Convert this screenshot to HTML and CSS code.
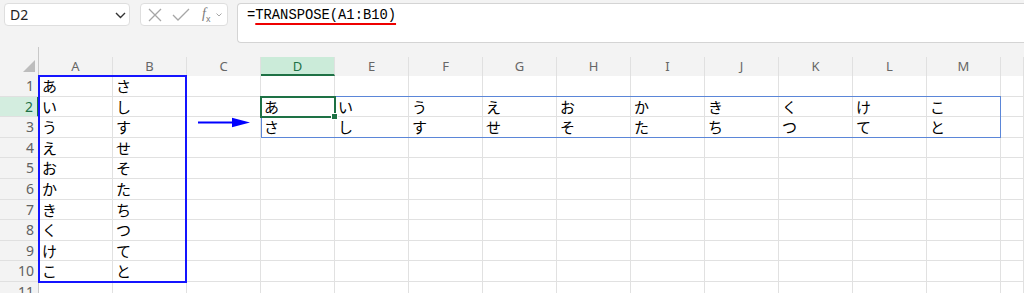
FILE: index.html
```html
<!DOCTYPE html>
<html lang="ja">
<head>
  <meta charset="UTF-8">
  <title>TRANSPOSE</title>
  <link rel="stylesheet" href="styles.css">
</head>
<body>
  <div class="toolbar">
    <div class="nameBox">
      <span>D2</span>
      <svg class="chev" width="11" height="7" viewBox="0 0 11 7"><path d="M1 1l4.5 4.5L10 1" fill="none" stroke="#333" stroke-width="1.4"/></svg>
    </div>
    <div class="ctrlBox">
      <svg width="14" height="14" viewBox="0 0 14 14"><path d="M1 1l12 12M13 1L1 13" stroke="#a6a6a6" stroke-width="1.3" fill="none"/></svg>
      <svg width="18" height="14" viewBox="0 0 18 14"><path d="M1 7l5 5L17 1" stroke="#a6a6a6" stroke-width="1.3" fill="none"/></svg>
      <span class="fx"><i>f</i><sub>x</sub></span>
      <svg width="6" height="4" viewBox="0 0 6 4"><path d="M0.5 0.5l2.5 2.5 2.5-2.5" stroke="#a6a6a6" stroke-width="1" fill="none"/></svg>
    </div>
    <div class="formulaBox">=<span class="err">TRANSPOSE(A1:B10)</span></div>
  </div>

  <div class="sheetWrap">
    <div class="sheet">
      <div class="h corner"></div>
      <div class="h">A</div><div class="h">B</div><div class="h">C</div><div class="h active">D</div><div class="h">E</div><div class="h">F</div><div class="h">G</div><div class="h">H</div><div class="h">I</div><div class="h">J</div><div class="h">K</div><div class="h">L</div><div class="h">M</div><div class="h"></div>

      <div class="rh">1</div><div class="c">あ</div><div class="c">さ</div><div class="c"></div><div class="c"></div><div class="c"></div><div class="c"></div><div class="c"></div><div class="c"></div><div class="c"></div><div class="c"></div><div class="c"></div><div class="c"></div><div class="c"></div><div class="c"></div>
      <div class="rh active">2</div><div class="c">い</div><div class="c">し</div><div class="c"></div><div class="c">あ</div><div class="c">い</div><div class="c">う</div><div class="c">え</div><div class="c">お</div><div class="c">か</div><div class="c">き</div><div class="c">く</div><div class="c">け</div><div class="c">こ</div><div class="c"></div>
      <div class="rh">3</div><div class="c">う</div><div class="c">す</div><div class="c"></div><div class="c">さ</div><div class="c">し</div><div class="c">す</div><div class="c">せ</div><div class="c">そ</div><div class="c">た</div><div class="c">ち</div><div class="c">つ</div><div class="c">て</div><div class="c">と</div><div class="c"></div>
      <div class="rh">4</div><div class="c">え</div><div class="c">せ</div><div class="c"></div><div class="c"></div><div class="c"></div><div class="c"></div><div class="c"></div><div class="c"></div><div class="c"></div><div class="c"></div><div class="c"></div><div class="c"></div><div class="c"></div><div class="c"></div>
      <div class="rh">5</div><div class="c">お</div><div class="c">そ</div><div class="c"></div><div class="c"></div><div class="c"></div><div class="c"></div><div class="c"></div><div class="c"></div><div class="c"></div><div class="c"></div><div class="c"></div><div class="c"></div><div class="c"></div><div class="c"></div>
      <div class="rh">6</div><div class="c">か</div><div class="c">た</div><div class="c"></div><div class="c"></div><div class="c"></div><div class="c"></div><div class="c"></div><div class="c"></div><div class="c"></div><div class="c"></div><div class="c"></div><div class="c"></div><div class="c"></div><div class="c"></div>
      <div class="rh">7</div><div class="c">き</div><div class="c">ち</div><div class="c"></div><div class="c"></div><div class="c"></div><div class="c"></div><div class="c"></div><div class="c"></div><div class="c"></div><div class="c"></div><div class="c"></div><div class="c"></div><div class="c"></div><div class="c"></div>
      <div class="rh">8</div><div class="c">く</div><div class="c">つ</div><div class="c"></div><div class="c"></div><div class="c"></div><div class="c"></div><div class="c"></div><div class="c"></div><div class="c"></div><div class="c"></div><div class="c"></div><div class="c"></div><div class="c"></div><div class="c"></div>
      <div class="rh">9</div><div class="c">け</div><div class="c">て</div><div class="c"></div><div class="c"></div><div class="c"></div><div class="c"></div><div class="c"></div><div class="c"></div><div class="c"></div><div class="c"></div><div class="c"></div><div class="c"></div><div class="c"></div><div class="c"></div>
      <div class="rh">10</div><div class="c">こ</div><div class="c">と</div><div class="c"></div><div class="c"></div><div class="c"></div><div class="c"></div><div class="c"></div><div class="c"></div><div class="c"></div><div class="c"></div><div class="c"></div><div class="c"></div><div class="c"></div><div class="c"></div>
      <div class="rh">11</div><div class="c"></div><div class="c"></div><div class="c"></div><div class="c"></div><div class="c"></div><div class="c"></div><div class="c"></div><div class="c"></div><div class="c"></div><div class="c"></div><div class="c"></div><div class="c"></div><div class="c"></div><div class="c"></div>
    </div>

    <!-- overlays -->
    <div class="srcBox"></div>
    <div class="spillBox"></div>
    <div class="selBox"><span class="handle"></span></div>
    <svg class="arrow" width="56" height="14" viewBox="0 0 56 14">
      <path d="M2 6.5H38" stroke="#0000ff" stroke-width="2"/>
      <path d="M36 1.8L54 6.5L36 11.2Z" fill="#0000ff"/>
    </svg>
  </div>
</body>
</html>
```

FILE: styles.css
```css
html, body {
  margin: 0;
  padding: 0;
  height: 293px;
  overflow: hidden;
}

body {
  background: #f3f3f3;
  font-family: "Noto Sans", "Liberation Sans", "Noto Sans CJK JP", sans-serif;
  color: #000;
}

.toolbar {
  display: flex;
  align-items: flex-start;
  padding: 3px 0 0 4px;
  height: 54px;
  box-sizing: border-box;
}

.nameBox {
  width: 126px;
  height: 23px;
  box-sizing: border-box;
  background: #fff;
  border: 1px solid #dedede;
  border-radius: 4px;
  display: flex;
  align-items: center;
  justify-content: space-between;
  padding: 0 3px 0 5px;
  font-size: 14px;
  color: #222;
}

.nameBox .chev {
  margin-top: 1px;
}

.ctrlBox {
  margin-left: 10px;
  width: 88px;
  height: 23px;
  box-sizing: border-box;
  background: #fff;
  border: 1px solid #dedede;
  border-radius: 4px;
  display: flex;
  align-items: center;
  padding: 0 0 0 7px;
  gap: 10px;
}

.ctrlBox .fx {
  font-family: "Liberation Serif", serif;
  font-size: 14px;
  color: #7a7a7a;
  margin-left: 2px;
  margin-right: -4px;
}

.ctrlBox .fx sub {
  font-family: "Liberation Sans", sans-serif;
  font-size: 9px;
}

.formulaBox {
  margin-left: 9px;
  flex: 1;
  height: 40px;
  box-sizing: border-box;
  background: #fff;
  border: 1px solid #d4d4d4;
  border-right: none;
  border-radius: 4px 0 0 4px;
  padding: 4px 0 0 9px;
  font-family: "Liberation Mono", monospace;
  font-size: 13.8px;
  color: #000;
}

.formulaBox .err {
  text-decoration: underline;
  text-decoration-color: #ee0000;
  text-decoration-thickness: 1.5px;
  text-underline-offset: 4px;
}

.sheetWrap {
  position: relative;
  margin-top: 3px;
}

.sheet {
  display: grid;
  grid-template-columns: 39px repeat(13, 74px) 1fr;
  grid-template-rows: 19px repeat(11, 20.6px);
}

.h {
  background: #f3f3f3;
  color: #666;
  font-size: 13px;
  text-align: center;
  line-height: 19px;
  border-right: 1px solid #e0e0e0;
  box-sizing: border-box;
}

.h.active {
  background: #cbebd9;
  color: #1e7145;
  border-bottom: 2px solid #1e7145;
}

.corner {
  position: relative;
  border-right: 1px solid #c8c8c8;
}

.corner::before {
  content: "";
  position: absolute;
  right: -1px;
  top: -10px;
  height: 10px;
  border-right: 1px solid #c8c8c8;
}

.corner::after {
  content: "";
  position: absolute;
  right: 3px;
  bottom: 4px;
  width: 12px;
  height: 12px;
  background: #bdbdbd;
  clip-path: polygon(100% 0, 100% 100%, 0 100%);
}

.rh {
  background: #f3f3f3;
  color: #616161;
  font-size: 14px;
  text-align: right;
  padding-right: 4px;
  line-height: 20px;
  border-right: 1px solid #c8c8c8;
  border-bottom: 1px solid #e0e0e0;
  box-sizing: border-box;
}

.rh.active {
  background: #d3eddf;
  color: #1e7145;
  border-right: 2px solid #1e7145;
}

.c {
  background: #fff;
  border-right: 1px solid #e1e1e1;
  border-bottom: 1px solid #e1e1e1;
  box-sizing: border-box;
  padding-left: 3px;
  font-family: "Noto Sans CJK JP", sans-serif;
  font-size: 15px;
  line-height: 20px;
  overflow: hidden;
}

.srcBox {
  position: absolute;
  left: 38px;
  top: 18px;
  width: 149px;
  height: 208px;
  box-sizing: border-box;
  border: 2px solid #1414ff;
}

.spillBox {
  position: absolute;
  left: 261px;
  top: 39px;
  width: 740px;
  height: 42px;
  box-sizing: border-box;
  border: 1px solid #5b86d8;
}

.selBox {
  position: absolute;
  left: 260px;
  top: 39px;
  width: 76px;
  height: 22px;
  box-sizing: border-box;
  border: 2px solid #1e7145;
}

.selBox .handle {
  position: absolute;
  right: -4px;
  bottom: -4px;
  width: 5px;
  height: 5px;
  background: #1e7145;
  border: 1px solid #fff;
}

.arrow {
  position: absolute;
  left: 196px;
  top: 59px;
}
```
